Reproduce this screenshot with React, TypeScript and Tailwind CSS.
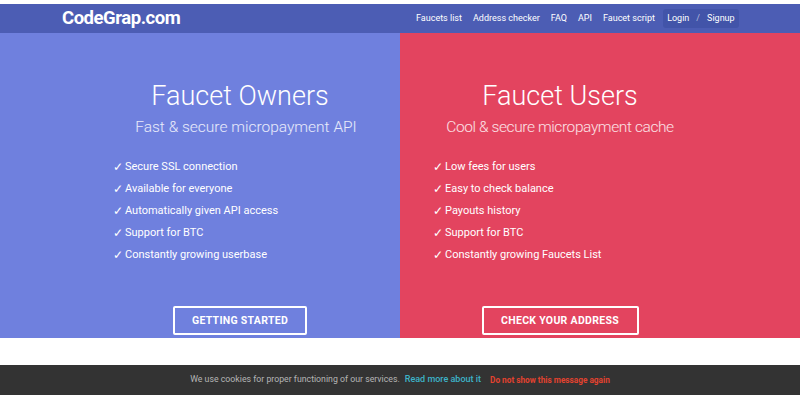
const owners = [
  'Secure SSL connection',
  'Available for everyone',
  'Automatically given API access',
  'Support for BTC',
  'Constantly growing userbase',
]

const users = [
  'Low fees for users',
  'Easy to check balance',
  'Payouts history',
  'Support for BTC',
  'Constantly growing Faucets List',
]

export default function App() {
  return (
    <div className="w-[800px] h-[400px] bg-white overflow-hidden font-['Roboto',sans-serif]">
      <div className="h-[4px]" />

      {/* Navbar */}
      <div className="h-[29px] bg-[#4c5db4] flex items-center">
        <div className="w-[400px] shrink-0 pl-[62px]">
          <span className="text-white font-bold text-[18.5px] tracking-tight">CodeGrap.com</span>
        </div>
        <div className="flex items-center text-[9px] text-white whitespace-nowrap pl-[16px]">
          <a className="mr-[11px]">Faucets list</a>
          <a className="mr-[11px]">Address checker</a>
          <a className="mr-[11px]">FAQ</a>
          <a className="mr-[11px]">API</a>
          <a className="mr-[8px]">Faucet script</a>
          <div className="bg-[#4254a9] rounded-[3px] h-[19px] w-[76px] flex items-center justify-center">
            Login <span className="mx-[7px] text-white/60">/</span> Signup
          </div>
        </div>
      </div>

      {/* Hero */}
      <div className="flex h-[305px]">
        <Column
          bg="bg-[#6f80de]"
          pad="pl-[80px]"
          title="Faucet Owners"
          sub="Fast & secure micropayment API"
          subShift="pl-[12px]"
          items={owners}
          button="GETTING STARTED"
          btnWidth="w-[134px]"
        />
        <Column
          bg="bg-[#e3445f]"
          pad="pr-[80px]"
          title="Faucet Users"
          sub="Cool & secure micropayment cache"
          subShift="tracking-[-0.4px]"
          items={users}
          button="CHECK YOUR ADDRESS"
          btnWidth="w-[157px]"
        />
      </div>

      <div className="h-[27px]" />

      {/* Cookie bar */}
      <div className="h-[30px] bg-[#333333] flex items-center justify-center text-[8.75px]">
        <span className="text-[#b5b5b5]">We use cookies for proper functioning of our services.</span>
        <span className="text-[#3db4c8] font-medium ml-[5px] text-[9px]">Read more about it</span>
        <span className="text-[#e2422f] font-bold ml-[9px] text-[8.25px]">Do not show this message again</span>
      </div>
    </div>
  )
}

function Column({ bg, pad, title, sub, subShift, items, button, btnWidth }: { bg: string; pad: string; title: string; sub: string; subShift: string; items: string[]; button: string; btnWidth: string }) {
  return (
    <div className={`w-[400px] ${bg} ${pad}`}>
      <div className="w-[320px] h-full flex flex-col text-white">
        <h1 className="text-center font-light text-[27px] leading-[34px] mt-[46px]">{title}</h1>
        <p className={`text-center font-light text-[15.5px] leading-[20px] mt-[4px] text-white/85 ${subShift}`}>{sub}</p>
        <ul className="mt-[19px] pl-[33px] text-[11px]">
          {items.map(t => (
            <li key={t} className="h-[22px] flex items-center">
              <span className="w-[12px] text-[12px]">✓</span>
              <span>{t}</span>
            </li>
          ))}
        </ul>
        <div className="mt-[40px] flex justify-center">
          <div className={`${btnWidth} h-[29px] border-2 border-white rounded-[2px] flex items-center justify-center text-[10.5px] font-bold tracking-[0.3px]`}>
            {button}
          </div>
        </div>
      </div>
    </div>
  )
}
